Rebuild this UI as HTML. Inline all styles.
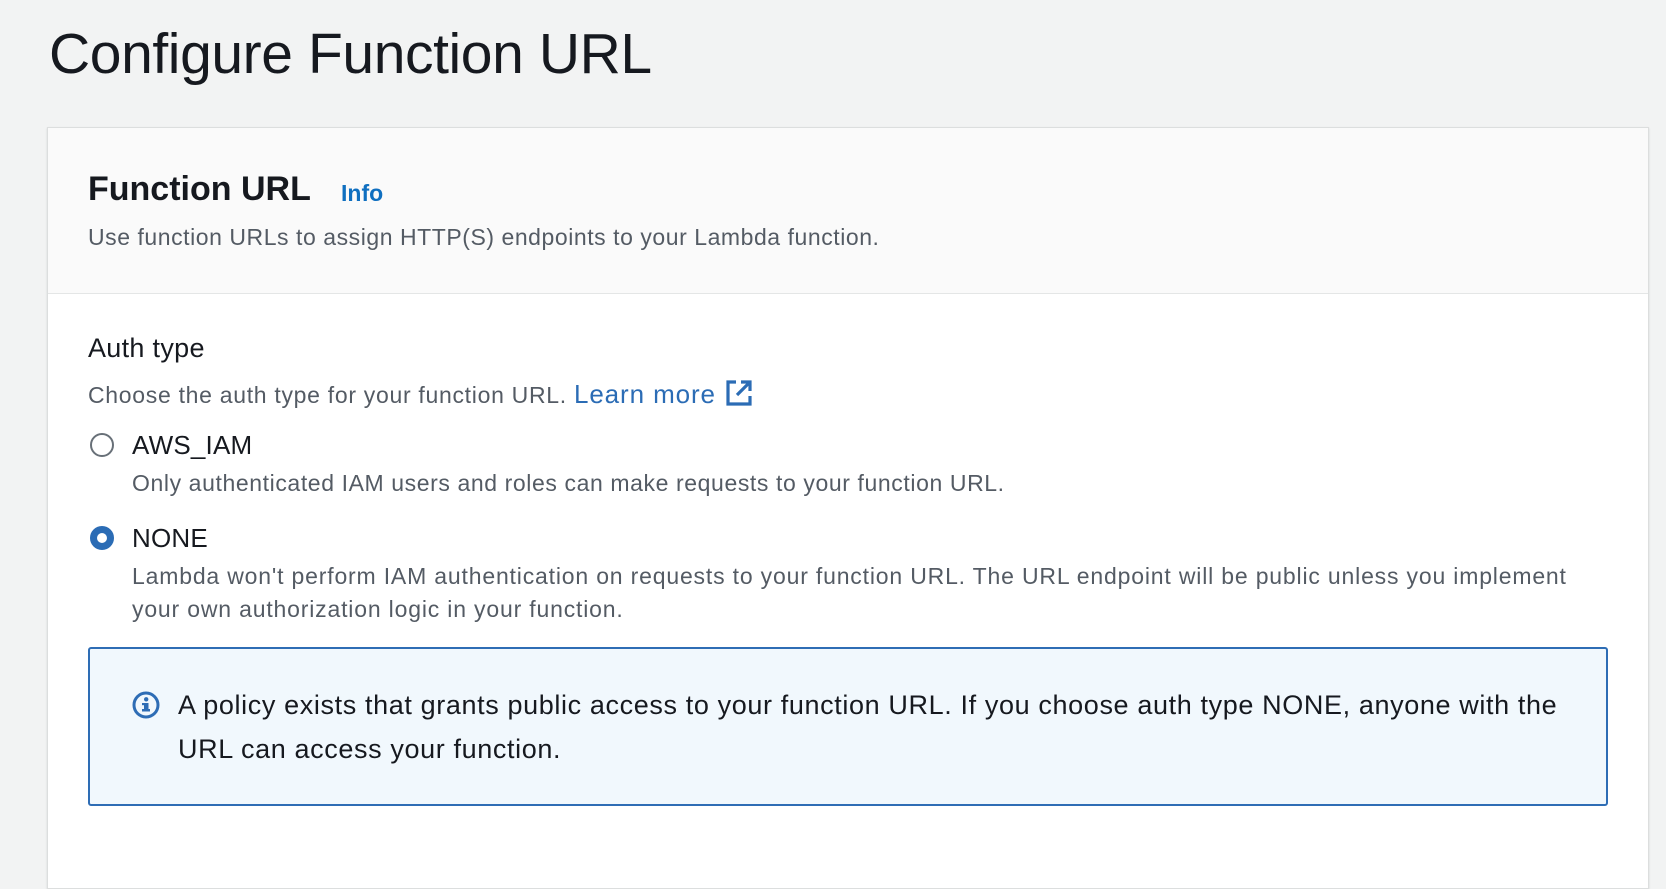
<!DOCTYPE html>
<html><head><meta charset="utf-8"><style>
body{margin:0;width:1666px;height:840px;background:#f2f3f3;font-family:"Liberation Sans",sans-serif;overflow:hidden;position:relative;color:#16191f}
.a{position:absolute;white-space:nowrap;line-height:1}
.card{position:absolute;left:47px;top:127px;width:1600px;height:760px;background:#fff;border:1px solid #dcdede;box-shadow:0 1px 2px rgba(0,0,0,.12)}
.hdr{position:absolute;left:0;top:0;width:100%;height:165px;background:#fafafa;border-bottom:1px solid #e4e6e6}
.g{color:#545b64}
.radio{position:absolute;width:24px;height:24px;border-radius:50%;box-sizing:border-box}
</style></head><body>
<div class="a" style="left:49px;top:26px;font-size:57px;letter-spacing:-0.4px">Configure Function URL</div>
<div class="card"><div class="hdr"></div></div>
<div class="a" style="left:88px;top:172px;font-size:34px;font-weight:bold">Function URL</div>
<div class="a" style="left:341px;top:182px;font-size:23px;font-weight:bold;color:#0f6fc0">Info</div>
<div class="a g" style="left:88px;top:226px;font-size:23px;letter-spacing:0.55px">Use function URLs to assign HTTP(S) endpoints to your Lambda function.</div>
<div class="a" style="left:88px;top:335px;font-size:27px;letter-spacing:0.3px">Auth type</div>
<div class="a g" style="left:88px;top:379px;font-size:23px;letter-spacing:0.7px">Choose the auth type for your function URL. <span style="color:#2b6cb5;font-size:26px;letter-spacing:0.9px">Learn more</span><svg style="vertical-align:-4px;margin-left:9px" width="28" height="28" viewBox="0 0 28 28" fill="none" stroke="#2b6cb5" stroke-width="3.2"><path d="M11 3H3v22h22v-8"/><path d="M16 3h9v9M25 3L12 16"/></svg></div>
<div class="radio" style="left:90px;top:433px;border:2px solid #687078"></div>
<div class="a" style="left:132px;top:432px;font-size:26px;letter-spacing:0.2px">AWS_IAM</div>
<div class="a g" style="left:132px;top:472px;font-size:23px;letter-spacing:0.6px">Only authenticated IAM users and roles can make requests to your function URL.</div>
<div class="radio" style="left:90px;top:526px;border:7px solid #2b6cb5;background:#fff"></div>
<div class="a" style="left:132px;top:525px;font-size:26px;letter-spacing:0.2px">NONE</div>
<div class="a g" style="left:132px;top:565px;font-size:23px;letter-spacing:0.82px">Lambda won't perform IAM authentication on requests to your function URL. The URL endpoint will be public unless you implement</div>
<div class="a g" style="left:132px;top:598px;font-size:23px;letter-spacing:0.82px">your own authorization logic in your function.</div>
<div style="position:absolute;left:88px;top:647px;width:1520px;height:159px;box-sizing:border-box;border:2px solid #2e6db5;border-radius:3px;background:#f1f8fd"></div>
<svg style="position:absolute;left:132px;top:691px" width="28" height="28" viewBox="0 0 28 28"><circle cx="14" cy="14" r="12" fill="none" stroke="#2e6db5" stroke-width="3"/><rect x="12" y="12" width="4.5" height="8" fill="#2e6db5"/><rect x="10" y="18" width="8" height="2.5" fill="#2e6db5"/><rect x="10" y="12" width="4" height="2.2" fill="#2e6db5"/><circle cx="14.2" cy="8.3" r="2.2" fill="#2e6db5"/></svg>
<div class="a" style="left:178px;top:692px;font-size:27px;letter-spacing:0.62px">A policy exists that grants public access to your function URL. If you choose auth type NONE, anyone with the</div>
<div class="a" style="left:178px;top:736px;font-size:27px;letter-spacing:0.62px">URL can access your function.</div>
</body></html>
